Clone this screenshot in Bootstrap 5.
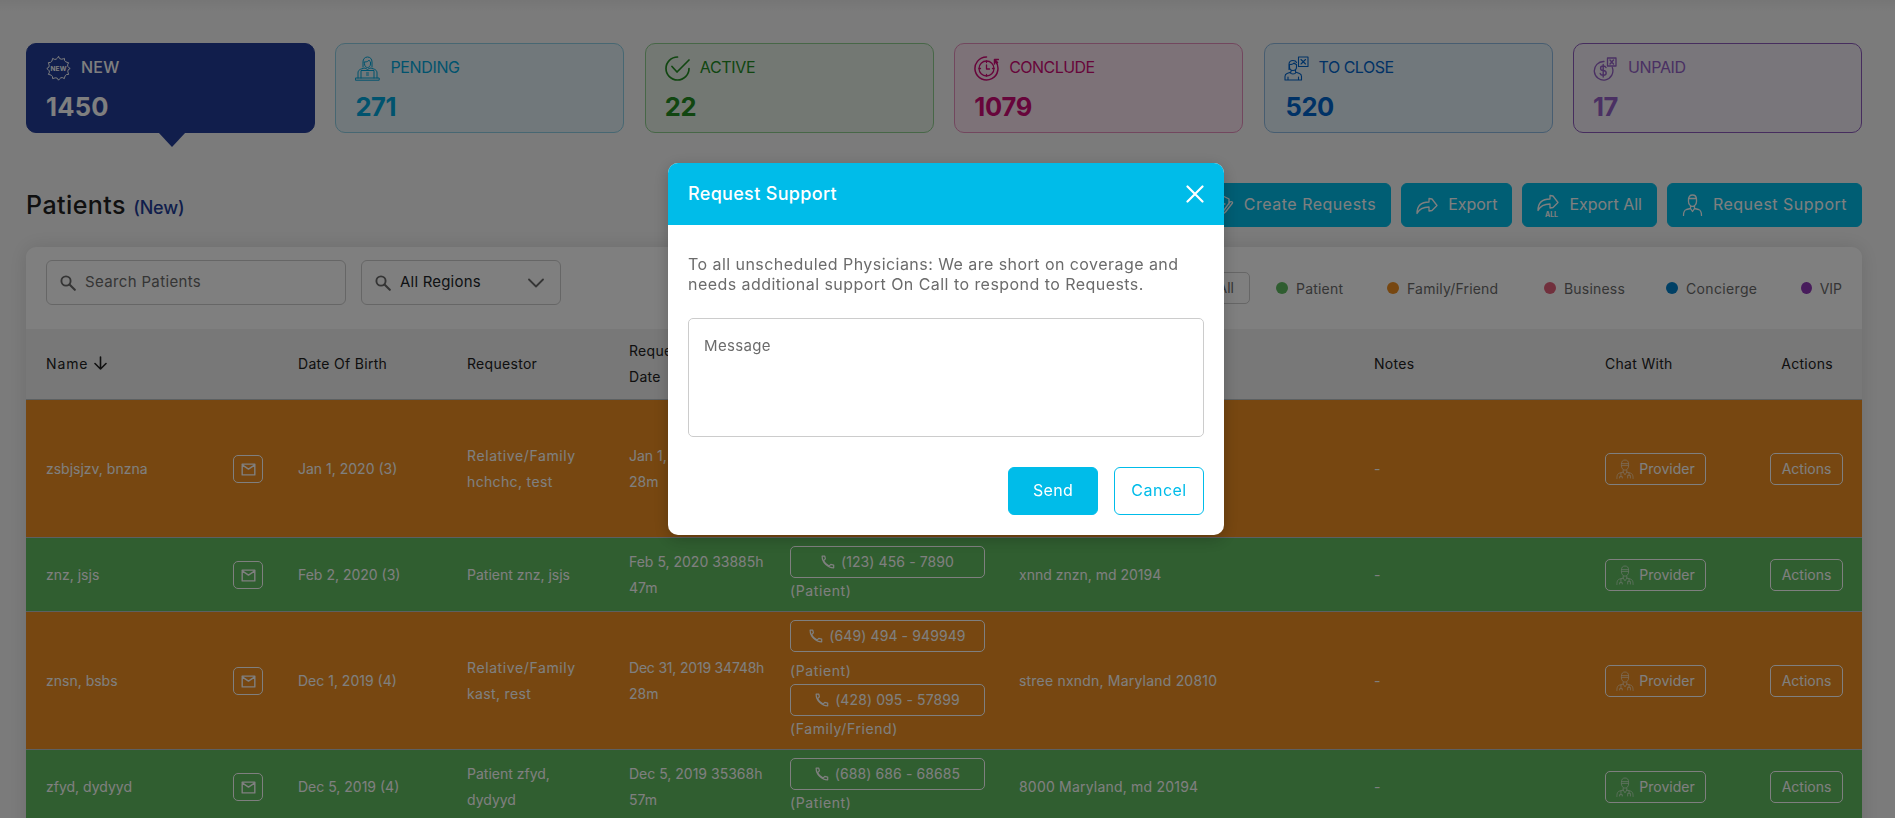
<!DOCTYPE html>
<html lang="en">
<head>
<meta charset="utf-8">
<title>Patients</title>
<link href="https://cdn.jsdelivr.net/npm/bootstrap@5.3.0/dist/css/bootstrap.min.css" rel="stylesheet">
<style>
:root{--cy:#00bce9}
html,body{height:818px;overflow:hidden}
body{background:#f7f7f7 linear-gradient(#ececec,#f7f7f7 12px) no-repeat;font-family:Inter,"Open Sans",sans-serif;font-size:14px;color:#212121}
svg{flex:none;fill:none;stroke:currentColor;stroke-width:1.3;stroke-linecap:round;stroke-linejoin:round}
svg text{fill:currentColor;stroke:none;font-weight:700}
.page{padding:43px 33px 0 26px}
.tiles{gap:20.3px}
.tile{flex:1 1 0;height:90px;border:1px solid;border-radius:10px;padding:11px 19px;position:relative}
.tile .cap{font-size:16px;gap:10px;height:26px;line-height:24px;letter-spacing:-.35px}
.tile .cap>span{padding-bottom:2px}
.tile .num{font-size:25.500px;font-weight:700;line-height:30px;margin-top:11px;letter-spacing:-.4px}
.t-new{background:#233d98;border-color:#233d98;color:#fff}
.tile.t-new .cap,.tile.t-new .num{letter-spacing:.2px}
.t-new::after{content:"";position:absolute;left:131px;top:88px;border:14px solid transparent;border-top:15px solid #233d98;border-bottom:0}
.t-pending{background:#e2f1f6;border-color:#8ecfe4;color:#00a6dc}
.t-active{background:#e6f1e6;border-color:#8fce8f;color:#228c22}
.t-conclude{background:#fbe5f0;border-color:#e58fbd;color:#cf0b76}
.t-close{background:#e3f0f8;border-color:#8fbbe2;color:#0064cc}
.t-unpaid{background:#f2ecf6;border-color:#8d5bbd;color:#9460c6}
.titlebar{margin-top:50px;height:44px}
.titlebar h1{font-size:25px;font-weight:500;margin:0 0 1px;letter-spacing:.45px}
.titlebar h1 span{font-size:18px;color:#233d98;letter-spacing:-.2px}
.btn-cy{background:var(--cy);border-color:var(--cy);color:#fff;font-size:16px;height:44px;border-radius:6px;padding:0 14px;gap:10px;display:flex;align-items:center}
.btn-cy span,.btn-line span{padding-bottom:2px}
.ls2{letter-spacing:.2px}.ls3{letter-spacing:.35px}.ls5{letter-spacing:.5px}.ls6{letter-spacing:.6px}.ls9{letter-spacing:.9px}
.panel{margin-top:20px;background:#fff;border-radius:10px;box-shadow:0 0 20px rgba(0,0,0,.12);overflow:hidden;height:600px}
.filters{height:82px;padding:13px 20px 0}
.field{height:45px;border:1px solid #ccc;border-radius:6px;padding:0 12px 0 13px;font-size:15px;gap:9px;color:#6b6b6b}
.legend{margin-top:12px;height:32px;color:#6b6b6b}
.all{border:1px solid #ccc;border-radius:5px;padding:0 15px;height:32px;line-height:30px;margin-right:26px}
.key::before{content:"";width:12px;height:12px;border-radius:50%;background:var(--k);margin-right:8px}
.grid{table-layout:fixed;width:1836px;border-collapse:separate;border-spacing:0;margin:0;line-height:26px}
.grid th,.grid td{padding:8px 0 8px 8px;vertical-align:middle;border-bottom:1px solid #b9c0c4;white-space:nowrap}
.grid td{padding-bottom:7px}
.grid th{font-weight:400;background:#f0f0f0;height:71px;padding:8px 0 8px 8px;letter-spacing:.3px}
.grid th:first-child,.grid td:first-child{padding-left:20px}
.grid th:last-child,.grid td:last-child{padding-right:19px;text-align:right}
.grid td{color:#fff}
.fam td{background:#ee8f22;height:138px}
.pat td{background:#60bc60;height:74px}
.obtn{border:1px solid #fff;border-radius:5px;height:32px;display:inline-flex;align-items:center;justify-content:center;color:#fff;vertical-align:middle}
.mailb{width:30px;height:28px}
.phone{width:195px;gap:6px;display:flex;letter-spacing:.1px}
.prov{width:101px;gap:5px}
.prov svg{opacity:.6}
.act{width:73px}
.modal-dialog{width:556px;max-width:556px;margin:163px 0 0 668px}
.modal-content{border:0;border-radius:10px;overflow:hidden;height:372px;box-shadow:0 4px 16px rgba(0,0,0,.22)}
.modal-header{background:var(--cy);color:#fff;height:62px;padding:0 20px;border:0;border-radius:0}
.modal-title{font-size:18px;font-weight:500;letter-spacing:.32px;padding-bottom:2px}
.modal-body{padding:29px 20px 0}
.modal-body p{font-size:16px;line-height:20px;color:#6b6b6b;margin:0 0 24px;letter-spacing:.45px}
.modal-body textarea{height:119px;border:1px solid #ccc;border-radius:5px;padding:16px 15px;font-size:15px;resize:none;letter-spacing:.35px}
.modal-body textarea::placeholder{color:#6b6b6b}
.modal-footer{border:0;padding:0 20px 20px;gap:16px}
.modal-footer .btn{width:90px;height:48px;font-size:16px;margin:0;padding:0;border-radius:6px;display:flex;align-items:center;justify-content:center}
.btn-line{border:1px solid var(--cy);color:var(--cy)}
</style>
</head>
<body>
<svg class="d-none">
<symbol id="mail" viewBox="0 0 16 14"><path d="M1.2 1.2h13.6v11.6H1.2zM1.2 2l6.8 4.6L14.800 2" stroke-width="1.5"/></symbol>
<symbol id="tel" viewBox="0 0 16 16"><path d="M1.300 1.300h3l.7 3.200-2 2c1.500 2.800 3.400 4.700 6.200 6.200l2-2 3.300.8v3.200C7.500 14.700 1.300 8.500 1.300 1.300z" stroke-width="1.400"/></symbol>
<symbol id="doc" viewBox="0 0 20 22"><path d="M6 5.500C6 2.500 7.500 1 10 1s4 1.500 4 4.500v2c0 2.500-1.800 4.800-4 4.800S6 10 6 7.500zM6 5h8M6 7h8M8 12v2.500L4 15.500c-2 .6-3 2-3 6M12 12v2.500l4 1c2 .6 3 2 3 6M8 14.500l2 3 2-3M5.500 15.500v4M4 21v-1.500h3V21M14.500 15.500v2.500M13 21v-3h3v3" stroke-width="1"/></symbol>
<symbol id="lens" viewBox="0 0 16 16"><circle cx="6" cy="6" r="4.600" stroke-width="1.900"/><path d="M9.500 9.500l5.300 5.300" stroke-width="2.100"/></symbol>
</svg>
<main class="page">
<section class="tiles d-flex">
<div class="tile t-new"><div class="cap fw-medium d-flex align-items-center"><svg width="25" height="25" viewBox="0 0 25 25"><path d="M12.500.8Q13.500 3.500 15.500 3.200T18.400 2.400Q18.200 5 19.600 5.700T22.600 6.700Q21 9 21.800 10.400T24.200 12.500Q21.500 13.500 21.800 15.200T22.600 18.400Q20 18.200 19.300 19.600T18.400 22.600Q16 21 14.800 21.800T12.500 24.200Q11.500 21.500 9.800 21.800T6.600 22.600Q6.800 20 5.400 19.300T2.400 18.400Q4 16 3.200 14.800T.8 12.500Q3.500 11.500 3.200 9.800T2.400 6.600Q5 6.800 5.700 5.400T6.600 2.400Q9 4 10.200 3.200T12.500.8z" stroke-width="1"/><text x="12.500" y="15" font-size="6.500" text-anchor="middle">NEW</text></svg><span>NEW</span></div><div class="num">1450</div></div>
<div class="tile t-pending"><div class="cap d-flex align-items-center"><svg width="25" height="25" viewBox="0 0 25 25"><path d="M8 11V6c0-3 1.800-5 4.500-5S17 3 17 6v5M9.500 6c3 0 4-1 4.500-2 .5 1.500 1.500 2 1.500 2v2c0 2-1.300 3.500-3 3.500S9.500 10 9.500 8zM3 22v-5c0-3 2-4 7-5l2.500 1.500L15 12c5 1 7 2 7 5v5M6 22v-7.500h13V22M.8 22h23.400v2.200H.8zM11.500 17h2M11.500 19h2" stroke-width="1"/></svg><span>PENDING</span></div><div class="num">271</div></div>
<div class="tile t-active"><div class="cap d-flex align-items-center"><svg width="25" height="25" viewBox="0 0 25 25"><path d="M12.500 1A11.500 11.500 0 1 0 24 12.500M7 10.500l5 5.500L24 4" stroke-width="1.700"/></svg><span>ACTIVE</span></div><div class="num">22</div></div>
<div class="tile t-conclude"><div class="cap d-flex align-items-center"><svg width="25" height="25" viewBox="0 0 25 25"><path d="M12.500 1A11.500 11.500 0 1 0 21 4.800M20.500 8V3.500H24.500M21 4l2.500 2.500" stroke-width="1.500"/><circle cx="12.500" cy="12.500" r="7.500"/><path d="M12.500 9v4h3M12.500 5v1.500M12.500 18.500V20M5 12.500h1.500M18.500 12.500H20"/></svg><span style="letter-spacing:-.55px">CONCLUDE</span></div><div class="num" style="letter-spacing:-.2px">1079</div></div>
<div class="tile t-close"><div class="cap d-flex align-items-center"><svg width="25" height="25" viewBox="0 0 25 25"><path d="M14.500 1H24v9.500h-9.500zM17 3.500l4.500 4.500M21.500 3.500L17 8M12.500 6.500C12 5 10.500 4.500 9 4.500c-2.500 0-4 1.500-4 4v5M5.500 8.500c3 0 4-.5 4.500-1.500 1 1 2.500 1.500 2.500 1.500v2.500c0 2-1.500 3.500-3.500 3.500s-3.500-1.500-3.500-3.500zM7 14v2l-4 1.500c-1.500.6-2 1.500-2 3V24h16.500v-3.500c0-1.500-.5-2.400-2-3l-4-1.500v-2M6 16.500c1 2 5 2 6 0M4 24v-3M14.500 24v-3" stroke-width="1.100"/></svg><span style="letter-spacing:-.5px">TO CLOSE</span></div><div class="num ps-1" style="margin-left:-2px">520</div></div>
<div class="tile t-unpaid"><div class="cap d-flex align-items-center"><svg width="25" height="25" viewBox="0 0 25 25"><path d="M11 5.500a9.300 9.300 0 1 0 8.300 6M14.500 2H23v8h-8.500zM17 4l3.500 4M20.500 4L17 8" stroke-width="1.300"/><path d="M13 11.500c-.5-1-1.300-1.500-2.800-1.500-3.500 0-3.500 4.200 0 4.500 4 .3 4 4.800 0 4.800-1.500 0-2.700-.6-3-1.800M10.200 8.500v12.500" stroke-width="1.400"/></svg><span>UNPAID</span></div><div class="num">17</div></div>
</section>
<section class="titlebar d-flex align-items-center justify-content-between">
<h1>Patients <span>(New)</span></h1>
<div class="d-flex" style="gap:10px">
<button class="btn btn-cy"><svg width="21" height="21" viewBox="0 0 21 21"><path d="M3 8V4l7-3 6 3v5M6 9h6M6 12h4M3 8v9l5 2M19.500 8l-7 9-2.500 2 .7-3.500L17 7c1-1 3 0 2.500 1z"/></svg><span class="ls5">Create Requests</span></button>
<button class="btn btn-cy"><svg width="22" height="21" viewBox="0 0 22 21"><path d="M1 18.500C1 11 5 7 13 7V3.500l3 .5 5 6.500-5 5-3 .5v-4C7 12 3.500 13.500 1 18.500z"/></svg><span>Export</span></button>
<button class="btn btn-cy"><svg width="22" height="23" viewBox="0 0 22 23"><path d="M1 16.500C1 9 5 5 13 5V1.500l3 .5 5 6.500-5 5-3 .5v-4C7 10 3.500 11.500 1 16.500z"/><text x="14.500" y="22.500" font-size="7" text-anchor="middle">ALL</text></svg><span>Export All</span></button>
<button class="btn btn-cy"><svg width="21" height="22" viewBox="0 0 20 22"><path d="M6 5.500C6 2.500 7.500 1 10 1s4 1.500 4 4.500v2c0 2.500-1.800 4.800-4 4.800S6 10 6 7.500zM6 4.500h8M8 12v2.500L4 15.500c-2 .6-3 2-3 6M12 12v2.500l4 1c2 .6 3 2 3 6M8 14.500l2 3 2-3"/></svg><span class="ls5">Request Support</span></button>
</div>
</section>
<section class="panel">
<div class="filters d-flex align-items-start">
<div class="field d-flex align-items-center" style="width:300px"><svg width="16" height="16"><use href="#lens"/></svg><span class="ls3">Search Patients</span></div>
<div class="field d-flex align-items-center" style="width:200px;margin-left:15px"><svg width="16" height="16"><use href="#lens"/></svg><span class="text-dark ls2">All Regions</span><svg class="ms-auto me-1" width="16" height="10" viewBox="0 0 16 10"><path d="M1 1.500l7 7 7-7" stroke-width="1.800"/></svg></div>
<div class="legend d-flex align-items-center ms-auto">
<span class="all">All</span>
<span class="key ls2 d-flex align-items-center" style="--k:#5fbb60;width:111px">Patient</span>
<span class="key ls2 d-flex align-items-center" style="--k:#ee8f22;width:157px">Family/Friend</span>
<span class="key ls2 d-flex align-items-center" style="--k:#e2617a;width:122px">Business</span>
<span class="key ls3 d-flex align-items-center" style="--k:#0080ca;width:135px">Concierge</span>
<span class="key d-flex align-items-center" style="--k:#9039b8;width:41px">VIP</span>
</div>
</div>
<table class="grid">
<colgroup><col style="width:199px"><col style="width:65px"><col style="width:169px"><col style="width:162px"><col style="width:161px"><col style="width:229px"><col style="width:355px"><col style="width:231px"><col style="width:155px"><col style="width:110px"></colgroup>
<thead><tr><th><span class="ls9">Name</span> <svg width="13" height="14" viewBox="0 0 13 14" style="margin:-4px 0 0 1px"><path d="M6.500 1v12M1 7.500L6.500 13 12 7.500" stroke-width="1.600"/></svg></th><th></th><th>Date Of Birth</th><th class="ls5">Requestor</th><th>Requested<br>Date</th><th>Phone</th><th>Address</th><th>Notes</th><th class="ls5">Chat With</th><th style="padding-right:29px">Actions</th></tr></thead>
<tbody>
<tr class="fam"><td>zsbjsjzv, bnzna</td><td><span class="obtn mailb"><svg width="15" height="13"><use href="#mail"/></svg></span></td><td>Jan 1, 2020 (3)</td><td><span class="ls6">Relative/Family</span><br><span class="ls3">hchchc, test</span></td><td>Jan 1, 2020 34724h<br>28m</td><td></td><td></td><td>-</td><td><span class="obtn prov"><svg width="18" height="20"><use href="#doc"/></svg>Provider</span></td><td><span class="obtn act">Actions</span></td></tr>
<tr class="pat"><td>znz, jsjs</td><td><span class="obtn mailb"><svg width="15" height="13"><use href="#mail"/></svg></span></td><td>Feb 2, 2020 (3)</td><td>Patient znz, jsjs</td><td>Feb 5, 2020 33885h<br>47m</td><td><span class="obtn phone"><svg width="14" height="14"><use href="#tel"/></svg>(123) 456 - 7890</span><span class="ls6">(Patient)</span></td><td>xnnd znzn, md 20194</td><td>-</td><td><span class="obtn prov"><svg width="18" height="20"><use href="#doc"/></svg>Provider</span></td><td><span class="obtn act">Actions</span></td></tr>
<tr class="fam"><td>znsn, bsbs</td><td><span class="obtn mailb"><svg width="15" height="13"><use href="#mail"/></svg></span></td><td>Dec 1, 2019 (4)</td><td><span class="ls6">Relative/Family</span><br><span class="ls3">kast, rest</span></td><td><span style="letter-spacing:-.2px">Dec 31, 2019 34748h</span><br>28m</td><td><span class="obtn phone" style="margin-bottom:6px"><svg width="14" height="14"><use href="#tel"/></svg>(649) 494 - 949949</span><span class="ls6">(Patient)</span><span class="obtn phone"><svg width="14" height="14"><use href="#tel"/></svg>(428) 095 - 57899</span><span class="ls6">(Family/Friend)</span></td><td class="ls2">stree nxndn, Maryland 20810</td><td>-</td><td><span class="obtn prov"><svg width="18" height="20"><use href="#doc"/></svg>Provider</span></td><td><span class="obtn act">Actions</span></td></tr>
<tr class="pat"><td>zfyd, dydyyd</td><td><span class="obtn mailb"><svg width="15" height="13"><use href="#mail"/></svg></span></td><td>Dec 5, 2019 (4)</td><td>Patient zfyd,<br>dydyyd</td><td>Dec 5, 2019 35368h<br>57m</td><td><span class="obtn phone"><svg width="14" height="14"><use href="#tel"/></svg>(688) 686 - 68685</span><span class="ls6">(Patient)</span></td><td class="ls2">8000 Maryland, md 20194</td><td>-</td><td><span class="obtn prov"><svg width="18" height="20"><use href="#doc"/></svg>Provider</span></td><td><span class="obtn act">Actions</span></td></tr>
</tbody>
</table>
</section>
</main>
<div class="modal-backdrop show"></div>
<div class="modal show d-block overflow-hidden">
<div class="modal-dialog"><div class="modal-content">
<div class="modal-header"><h5 class="modal-title">Request Support</h5><svg width="18" height="18" viewBox="0 0 18 18"><path d="M1.500 1.500l15 15M16.500 1.500l-15 15" stroke-width="2.200"/></svg></div>
<div class="modal-body"><p>To all unscheduled Physicians: We are short on coverage and<br>needs additional support On Call to respond to Requests.</p><textarea class="form-control" placeholder="Message"></textarea></div>
<div class="modal-footer"><button class="btn btn-cy"><span class="ls3">Send</span></button><button class="btn btn-line"><span class="ls5">Cancel</span></button></div>
</div></div>
</div>
<script src="https://cdn.jsdelivr.net/npm/bootstrap@5.3.0/dist/js/bootstrap.bundle.min.js"></script>
</body>
</html>
